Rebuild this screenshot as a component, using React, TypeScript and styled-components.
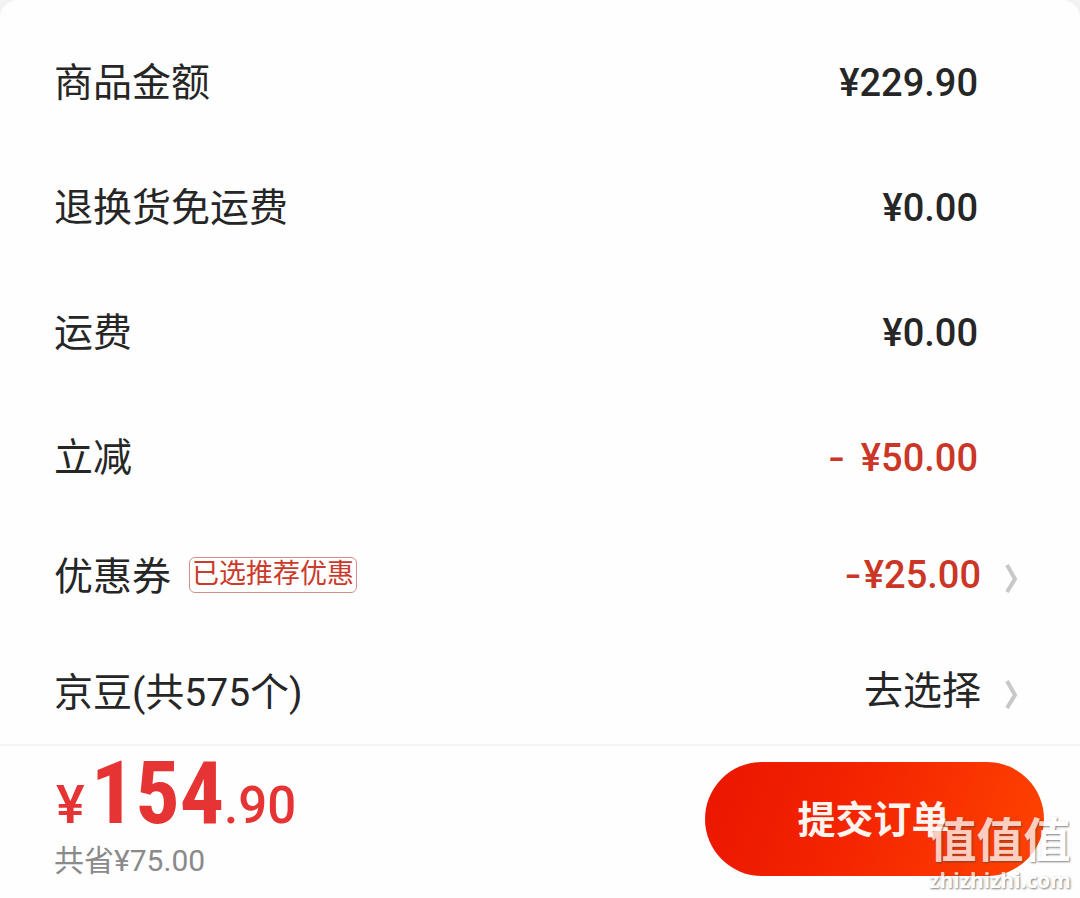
import React from "react";
import styled, { createGlobalStyle } from "styled-components";

const GlobalStyle = createGlobalStyle`
  * { box-sizing: border-box; }
  body {
    margin: 0;
    background: #f3f3f3;
    color: #262626;
    font-family: Roboto, "Noto Sans CJK SC", sans-serif;
    -webkit-font-smoothing: antialiased;
  }
  button { font: inherit; color: inherit; border: 0; background: none; padding: 0; cursor: pointer; }
`;

const Sheet = styled.main`
  min-height: 100vh;
  display: flex;
  flex-direction: column;
  background: #fefefe;
  border-radius: 18px 18px 0 0;
`;

const Summary = styled.section`
  display: flex;
  flex-direction: column;
  gap: 63px;
  padding: 55px 0 23px;
`;

const Group = styled.div<{ $gap: number }>`
  display: flex;
  flex-direction: column;
  gap: ${(p) => p.$gap}px;
`;

const Row = styled.div`
  display: flex;
  align-items: center;
  justify-content: space-between;
  height: 56px;
  padding: 0 102px 0 54px;
  font-size: 39px;
  line-height: 56px;
`;

const LinkRow = styled(Row).attrs({ as: "button", type: "button" })`
  && {
    width: 100%;
    padding: 0 61px 0 54px;
    font-size: 39px;
    line-height: 56px;
  }
`;

const Label = styled.span`
  display: flex;
  align-items: center;
  gap: 18px;
`;

const Tag = styled.span`
  height: 36px;
  margin-bottom: 4px;
  padding: 0 2px;
  border: 1px solid #d0908a;
  border-radius: 6px;
  color: #cc3a2b;
  font-size: 27px;
  line-height: 32px;
`;

const Amount = styled.span<{ $discount?: boolean }>`
  font-size: 38px;
  font-weight: 500;
  color: ${(p) => (p.$discount ? "#cb3626" : "#262626")};
`;

const Minus = styled.span<{ $spaced?: boolean }>`
  padding-right: ${(p) => (p.$spaced ? 6 : 2)}px;
  font-family: Inter, sans-serif;
  line-height: 1;
`;

const Action = styled.span`
  display: flex;
  align-items: center;
  gap: 24px;
`;

const ActionValue = styled.span`
  padding-bottom: 4px;
`;

const Footer = styled.footer`
  flex: 1;
  display: flex;
  align-items: flex-start;
  justify-content: space-between;
  padding: 16px 36px 20px 54px;
  border-top: 2px solid #f4f4f4;
`;

const Total = styled.div`
  display: flex;
  align-items: baseline;
  height: 76px;
  padding-left: 2px;
  line-height: 62px;
  color: #e63434;
  font-weight: 500;
  font-size: 54px;
`;

const Whole = styled.strong`
  padding-left: 6px;
  font-family: "Roboto Condensed", "Liberation Sans Narrow", Roboto, sans-serif;
  font-size: 88px;
  font-weight: 700;
`;

const Cents = styled.span`
  font-size: 51px;
`;

const Saved = styled.div`
  color: #8a8a8a;
  font-size: 30px;
  line-height: 46px;
`;

const SubmitArea = styled.div`
  position: relative;
`;

const Submit = styled.button`
  && {
    display: block;
    width: 339px;
    height: 114px;
    padding: 0 2px 6px 0;
    border-radius: 57px;
    background: linear-gradient(110deg, #ea1500 0%, #f42500 45%, #ff4400 100%);
    color: #fff4ee;
    font-size: 38px;
    font-weight: 700;
  }
`;

const Watermark = styled.div`
  position: absolute;
  right: -27px;
  bottom: -19px;
  display: flex;
  flex-direction: column;
  align-items: center;
  color: #ffffff;
  opacity: 0.75;
  text-shadow: 1px 1px 2px rgba(70, 70, 70, 0.9);
  font-weight: 700;
  pointer-events: none;
`;

const Brand = styled.span`
  font-size: 47px;
  line-height: 48px;
`;

const Site = styled.span`
  font-family: "Open Sans", sans-serif;
  font-size: 21px;
  font-weight: 700;
  line-height: 30px;
`;

const Chevron = () => (
  <svg width="14" height="32" viewBox="0 0 14 32" fill="none" stroke="#c8c8c8" strokeWidth="4" aria-hidden="true">
    <path d="M2 4 L10 18 L2 31" />
  </svg>
);

const charges = [
  { label: "商品金额", amount: "¥229.90" },
  { label: "退换货免运费", amount: "¥0.00" },
  { label: "运费", amount: "¥0.00" },
  { label: "立减", amount: " ¥50.00", discount: true },
];

export default function App() {
  return (
    <>
      <GlobalStyle />
      <Sheet>
        <Summary>
          <Group $gap={69}>
            {charges.map((c) => (
              <Row key={c.label}>
                <Label>{c.label}</Label>
                <Amount $discount={c.discount}>
                  {c.discount && <Minus $spaced>-</Minus>}
                  {c.amount}
                </Amount>
              </Row>
            ))}
          </Group>
          <Group $gap={60}>
            <LinkRow>
              <Label>
                优惠券
                <Tag>已选推荐优惠</Tag>
              </Label>
              <Action>
                <ActionValue>
                  <Amount $discount>
                    <Minus>-</Minus>¥25.00
                  </Amount>
                </ActionValue>
                <Chevron />
              </Action>
            </LinkRow>
            <LinkRow>
              <Label>京豆(共575个)</Label>
              <Action>
                <ActionValue>去选择</ActionValue>
                <Chevron />
              </Action>
            </LinkRow>
          </Group>
        </Summary>
        <Footer>
          <div>
            <Total>
              <span>¥</span>
              <Whole>154</Whole>
              <Cents>.90</Cents>
            </Total>
            <Saved>共省¥75.00</Saved>
          </div>
          <SubmitArea>
            <Submit type="button">提交订单</Submit>
            <Watermark>
              <Brand>值值值</Brand>
              <Site>zhizhizhi.com</Site>
            </Watermark>
          </SubmitArea>
        </Footer>
      </Sheet>
    </>
  );
}
